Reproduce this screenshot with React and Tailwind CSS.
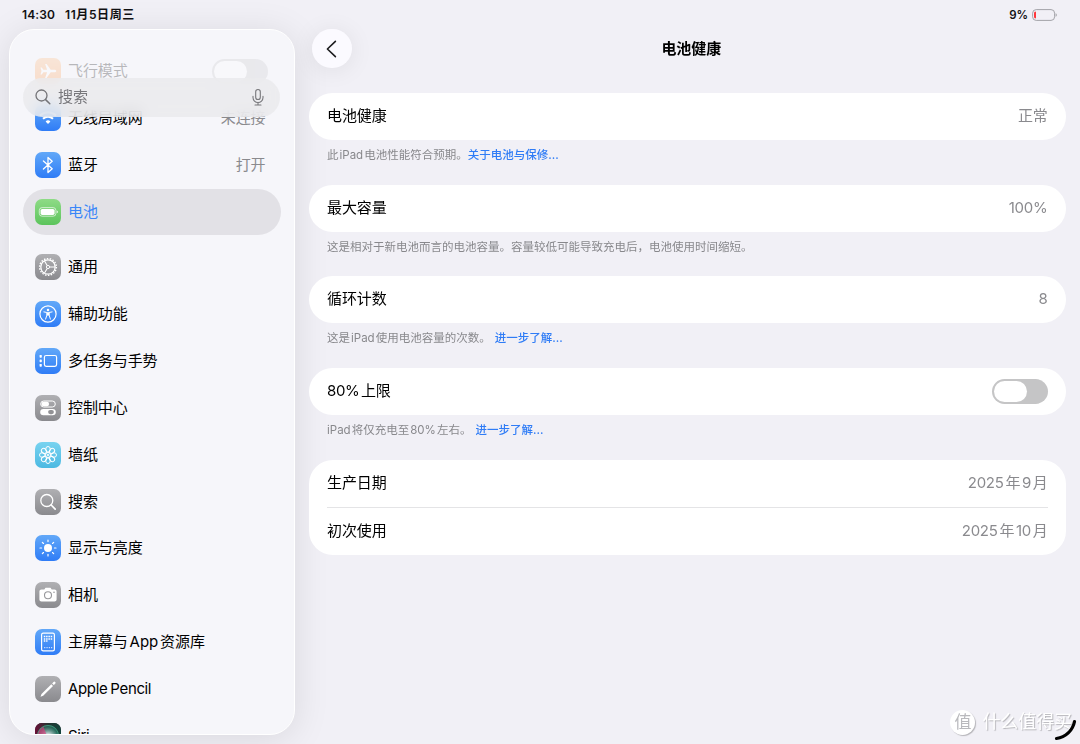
import clsx from 'clsx';

const iconColors = {
  orange: 'bg-linear-to-b from-[#ffb673] to-[#ff9440]',
  blue: 'bg-linear-to-b from-[#62a8f8] to-[#2f7cf6]',
  green: 'bg-linear-to-b from-[#8edb86] to-[#5cc45c]',
  gray: 'bg-linear-to-b from-[#b0b0b3] to-[#8a8a8e]',
  cyan: 'bg-linear-to-b from-[#78d3f0] to-[#4bb9e2]',
  siri: 'bg-[#27131f]',
};

const glyphs = {
  airplane: (
    <path
      d="M21.3 13c0-.8-1-1.3-2.2-1.3h-3.4L11.6 6h-1.5l2 5.7H8.4L6.8 9.6H5.5l1 3.4-1 3.4h1.3l1.6-2.1h3.7l-2 5.7h1.5l4.1-5.7h3.4c1.2 0 2.2-.5 2.2-1.3z"
      fill="white"
    />
  ),
  wifi: (
    <g fill="none" stroke="white" strokeWidth="2.1">
      <path d="M5 10.6a11.4 11.4 0 0 1 16 0" />
      <path d="M8 13.8a7.2 7.2 0 0 1 10 0" />
      <path d="M13 19l-2.4-2.6a3.4 3.4 0 0 1 4.8 0z" fill="white" stroke="none" />
    </g>
  ),
  bluetooth: (
    <path d="M8.4 9l8.8 7.7-4.2 3.8v-15l4.2 3.8L8.4 17" fill="none" stroke="white" strokeWidth="1.3" strokeLinejoin="round" strokeLinecap="round" />
  ),
  battery: (
    <g>
      <rect x="4.3" y="8.6" width="16.6" height="8.6" rx="2.8" fill="none" stroke="white" strokeWidth=".8" strokeOpacity=".8" />
      <rect x="5.6" y="9.9" width="14" height="6" rx="1.7" fill="white" />
      <path d="M21.8 11.5v2.8c.7-.3 1-.8 1-1.4s-.3-1.1-1-1.4z" fill="white" />
    </g>
  ),
  gear: (
    <g fill="none" stroke="white">
      <circle cx="13" cy="13" r="8.4" strokeWidth="1.4" strokeDasharray="1.5 1.432" />
      <circle cx="13" cy="13" r="7.2" strokeWidth="1.3" />
      <circle cx="13" cy="13" r="1.6" strokeWidth="1" />
      <path d="M14.6 13h5.4M12.2 11.6L9.5 6.9M12.2 14.4l-2.7 4.7" strokeWidth="1.1" />
    </g>
  ),
  accessibility: (
    <g>
      <circle cx="13" cy="13" r="8.1" fill="none" stroke="white" strokeWidth="1.2" />
      <circle cx="13" cy="8.9" r="1.25" fill="white" />
      <path d="M8.9 10.9l3 .6v2.6l-1.3 4M17.1 10.9l-3 .6v2.6l1.3 4" fill="none" stroke="white" strokeWidth="1" strokeLinecap="round" strokeLinejoin="round" />
      <path d="M11.7 11.2h2.6v3.2h-2.6z" fill="white" />
    </g>
  ),
  multitask: (
    <g>
      <rect x="9.4" y="7.5" width="12.2" height="10.8" rx="1.7" fill="none" stroke="white" strokeWidth="1.2" />
      <rect x="4.6" y="7" width="2.2" height="2.7" rx=".6" fill="white" />
      <rect x="4.6" y="11.5" width="2.2" height="2.7" rx=".6" fill="white" />
      <rect x="4.6" y="16" width="2.2" height="2.7" rx=".6" fill="white" />
    </g>
  ),
  control: (
    <g>
      <rect x="5.7" y="6" width="14.6" height="6" rx="3" fill="none" stroke="white" strokeWidth="1" />
      <rect x="6.5" y="6.7" width="7.6" height="4.6" rx="2.3" fill="white" />
      <rect x="5.2" y="13.9" width="15.6" height="6.4" rx="3.2" fill="white" />
      <rect x="13.1" y="15" width="5.8" height="4.2" rx="2.1" fill="#929295" />
    </g>
  ),
  flower: (
    <g fill="none" stroke="white" strokeWidth="1">
      {[0, 45, 90, 135, 180, 225, 270, 315].map((angle) => (
        <ellipse key={angle} cx="13" cy="7.3" rx="2.3" ry="2.8" transform={`rotate(${angle} 13 13)`} />
      ))}
      <circle cx="13" cy="13" r="2.5" />
      <circle cx="13" cy="13" r="1.1" fill="white" stroke="none" />
    </g>
  ),
  search: (
    <g fill="none" stroke="white" strokeWidth="1.3" strokeLinecap="round">
      <circle cx="11.8" cy="11.5" r="6" />
      <path d="M16.2 16l4 4.1" strokeWidth="1.7" />
    </g>
  ),
  sun: (
    <g>
      <circle cx="13" cy="13" r="4" fill="white" />
      <g stroke="white" strokeWidth="1.2" strokeLinecap="round">
        {[0, 45, 90, 135, 180, 225, 270, 315].map((angle) => (
          <path key={angle} d="M13 5v1.6" transform={`rotate(${angle} 13 13)`} />
        ))}
      </g>
    </g>
  ),
  camera: (
    <g>
      <path d="M6.5 7.6h2.8l1-1.5c.2-.3.5-.4.9-.4h3.6c.4 0 .7.1.9.4l1 1.5h2.8c1.2 0 2.1.8 2.1 2v7.9c0 1.200-.9 2-2.1 2h-13c-1.2 0-2.1-.8-2.1-2V9.6c0-1.2.9-2 2.1-2z" fill="white" />
      <circle cx="13" cy="13.3" r="3.5" fill="none" stroke="#98989b" strokeWidth="1.1" />
      <circle cx="19" cy="10.3" r=".8" fill="#98989b" />
    </g>
  ),
  home: (
    <g>
      <rect x="6.6" y="4.2" width="12.8" height="17.6" rx="1.6" fill="none" stroke="white" strokeWidth="1.2" />
      <g fill="none" stroke="white" strokeWidth="1.5" strokeDasharray="1.5 .8">
        <path d="M8.8 7.6h8.4M8.8 9.9h8.4" />
        <path d="M8.8 12.1h3.7" />
        <path d="M9.2 18.7h8" strokeWidth="1" strokeDasharray="1.1 1.2" />
      </g>
    </g>
  ),
  pencil: (
    <g>
      <path d="M5.5 20.7l1-2.7 9.8-9.8 1.7 1.7-9.8 9.8z" fill="white" />
      <path d="M17.1 7.4l1.4-1.400a1.200 1.200 0 0 1 1.700 1.700l-1.400 1.400z" fill="white" />
    </g>
  ),
  siri: (
    <g>
      <defs>
        <linearGradient id="siriBg" x1="0" x2="1" y1="0" y2="0">
          <stop offset="0" stopColor="#6b0f37" />
          <stop offset=".5" stopColor="#243330" />
          <stop offset="1" stopColor="#12453c" />
        </linearGradient>
        <radialGradient id="siriGlow" cx=".5" cy=".58" r=".5">
          <stop offset="0" stopColor="#ffffff" />
          <stop offset=".35" stopColor="#c9d6d8" />
          <stop offset="1" stopColor="#2d8f78" stopOpacity=".5" />
        </radialGradient>
      </defs>
      <rect width="26" height="26" fill="url(#siriBg)" />
      <circle cx="13" cy="13" r="11" fill="url(#siriGlow)" />
      <path d="M2.5 13a10.5 10.5 0 0 1 6-9.3L12 13z" fill="#dd3a7c" fillOpacity=".65" />
      <circle cx="13" cy="13" r="10.6" fill="none" stroke="#58c49b" strokeOpacity=".7" strokeWidth=".7" />
    </g>
  ),
};

const menuGroups = [
  [
    { id: 'airplane', name: '飞行模式', color: 'orange', toggle: true, faded: true },
    { id: 'wifi', name: '无线局域网', color: 'blue', value: '未连接' },
    { id: 'bluetooth', name: '蓝牙', color: 'blue', value: '打开' },
    { id: 'battery', name: '电池', color: 'green' },
  ],
  [
    { id: 'gear', name: '通用', color: 'gray' },
    { id: 'accessibility', name: '辅助功能', color: 'blue' },
    { id: 'multitask', name: '多任务与手势', color: 'blue' },
    { id: 'control', name: '控制中心', color: 'gray' },
    { id: 'flower', name: '墙纸', color: 'cyan' },
    { id: 'search', name: '搜索', color: 'gray' },
    { id: 'sun', name: '显示与亮度', color: 'blue' },
    { id: 'camera', name: '相机', color: 'gray' },
    { id: 'home', name: '主屏幕与 App 资源库', color: 'blue' },
    { id: 'pencil', name: 'Apple Pencil', color: 'gray', tight: true },
    { id: 'siri', name: 'Siri', color: 'siri', tight: true },
  ],
];

const sections = [
  {
    rows: [{ label: '电池健康', value: '正常' }],
    note: '此 iPad 电池性能符合预期。',
    link: '关于电池与保修...',
    height: 'h-[92px]',
  },
  {
    rows: [{ label: '最大容量', value: '100%' }],
    note: '这是相对于新电池而言的电池容量。容量较低可能导致充电后，电池使用时间缩短。',
    height: 'h-[91px]',
  },
  {
    rows: [{ label: '循环计数', value: '8' }],
    note: '这是 iPad 使用电池容量的次数。',
    link: '进一步了解...',
    linkClass: 'ml-[4px]',
    height: 'h-[92px]',
  },
  {
    rows: [{ label: '80% 上限', toggle: true, tight: true }],
    note: 'iPad 将仅充电至 80% 左右。',
    link: '进一步了解...',
    linkClass: 'ml-[4px]',
    height: 'h-[92px]',
  },
  {
    rows: [
      { label: '生产日期', value: '2025 年 9 月' },
      { label: '初次使用', value: '2025 年 10 月' },
    ],
  },
];

function Toggle() {
  return (
    <button className="flex h-[25px] w-[56px] shrink-0 items-center rounded-full bg-[#c5c5c6] p-[2px]" aria-label="toggle">
      <span className="h-[21.5px] w-[33px] rounded-full bg-white" />
    </button>
  );
}

function StatusBar() {
  return (
    <header className="flex h-[29px] items-center justify-between pr-[23px] pl-[22px] text-[12px] font-semibold text-[#111113]">
      <div className="flex gap-[10px]">
        <span className="tracking-[0.1px]">14:30</span>
        <span className="tracking-[0.6px]">11月5日周三</span>
      </div>
      <div className="flex items-center gap-[4px]">
        <span className="text-[11.5px]">9%</span>
        <svg width="25" height="12" viewBox="0 0 25 12">
          <rect x=".6" y=".6" width="22" height="10.8" rx="3.6" fill="none" stroke="#a3a3a8" />
          <path d="M3.5 2.8v6.4c-.9 0-1.5-.6-1.5-1.5V4.3c0-.9.6-1.5 1.5-1.5z" fill="#ff383c" />
          <rect x="2.8" y="2.8" width="1.2" height="6.4" fill="#ff383c" />
          <path d="M23.6 4.2c.8.3 1.2 1 1.2 1.8s-.4 1.5-1.2 1.8z" fill="#a3a3a8" />
        </svg>
      </div>
    </header>
  );
}

function MenuItem({ item, selected }) {
  return (
    <div
      className={clsx(
        'flex h-[46.85px] items-center rounded-full pr-[15px] pl-[12px]',
        selected && 'bg-[#e2e1e6]',
        item.faded && 'opacity-25'
      )}
    >
      <span className={clsx('h-[26px] w-[26px] shrink-0 overflow-hidden rounded-[7px]', iconColors[item.color])}>
        <svg width="26" height="26" viewBox="0 0 26 26">{glyphs[item.id]}</svg>
      </span>
      <span
        className={clsx(
          'ml-[7px] flex-1',
          selected ? 'text-[#3a86f8]' : 'text-black',
          item.tight && 'tracking-[-0.36px] [word-spacing:-0.8px]'
        )}
      >
        {item.name}
      </span>
      {item.value && <span className="text-[#8a8a8e]">{item.value}</span>}
      {item.toggle && <div className="-mr-[2px] flex"><Toggle /></div>}
    </div>
  );
}

function Sidebar() {
  return (
    <aside className="relative h-[706px] w-[285.5px] shrink-0 overflow-hidden rounded-[25px] border border-white bg-[#f6f6fa] shadow-[0_4px_36px_rgba(0,0,0,0.1)]">
      <nav className="flex flex-col gap-[8.5px] px-[13px] pt-[18px]">
        {menuGroups.map((group, index) => (
          <div key={index}>
            {group.map((item) => (
              <MenuItem key={item.id} item={item} selected={item.id === 'battery'} />
            ))}
          </div>
        ))}
      </nav>
      {/* The search field floats over the scrolling list */}
      <div className="absolute top-[48px] left-[13px] flex h-[39px] w-[257px] items-center rounded-full bg-[#eaeaec]/80 pr-[15px] pb-[1px] pl-[12px] text-[#77777b] backdrop-blur-[7px]">
        <svg width="16" height="16" viewBox="0 0 16 16" fill="none" stroke="#747478" strokeWidth="1.3" strokeLinecap="round">
          <circle cx="6.5" cy="6.5" r="5.5" />
          <path d="M10.6 10.6l4.2 4.2" strokeWidth="1.5" />
        </svg>
        <span className="ml-[7px] flex-1">搜索</span>
        <svg width="14" height="18" viewBox="0 0 14 18" fill="none" stroke="#77777b" strokeWidth="1.1" strokeLinecap="round">
          <rect x="4.7" y="1.5" width="4.6" height="10" rx="2.3" />
          <path d="M2 8.3v1.2a5 5 0 0 0 10 0V8.3M7 14.5V17M4 17h6" />
        </svg>
      </div>
    </aside>
  );
}

function Section({ section }) {
  return (
    <section className={section.height}>
      <div className="rounded-[24px] bg-white px-[18px]">
        {section.rows.map((row, index) => (
          <div
            key={row.label}
            className={clsx('flex h-[47.5px] items-center justify-between', index > 0 && 'border-t border-[#e4e4e6]')}
          >
            <span className={clsx('text-black', row.tight && 'tracking-[-0.35px]')}>{row.label}</span>
            {row.toggle ? <Toggle /> : <span className="pr-[0.5px] tracking-[-0.25px] text-[#8a8a8e]">{row.value}</span>}
          </div>
        ))}
      </div>
      {section.note && (
        <p className="px-[18px] pt-[4.6px] text-[11.5px] leading-[20px] tracking-normal text-[#88888c]">
          {section.note}
          {section.link && (
            <a href="#" className={clsx('font-medium text-[#2f7cf6]', section.linkClass)}>
              {section.link}
            </a>
          )}
        </p>
      )}
    </section>
  );
}

function Watermark() {
  return (
    <div className="absolute right-[8px] bottom-[9px] flex items-center gap-[7px] text-white">
      <span className="flex h-[25px] w-[25px] items-center justify-center rounded-full bg-white text-[17px] leading-none text-[#b9b9bd] shadow-[1px_1px_1px_rgba(0,0,0,0.25)]">
        值
      </span>
      <span className="text-[18px] leading-[26px] [text-shadow:1px_1px_1px_rgba(0,0,0,0.25)]">什么值得买</span>
    </div>
  );
}

export default function App() {
  return (
    <div className="relative h-[744px] w-[1080px] overflow-hidden bg-[#f1f0f6] font-['Inter','Noto_Sans_CJK_SC',sans-serif] text-[15px] leading-[22px] tracking-[-0.08px] [word-spacing:-2.2px]">
      <StatusBar />
      <div className="flex pl-[9px]">
        <Sidebar />
        <main className="relative ml-[14.5px] w-[757px]">
          <div className="flex h-[63.5px] items-start pl-[3px]">
            <button
              className="flex h-[39px] w-[39.5px] items-center justify-center rounded-full bg-[#fbfaff] shadow-[0_2px_24px_rgba(0,0,0,0.08)]"
              aria-label="返回"
            >
              <svg width="12" height="18" viewBox="0 0 12 18" fill="none" stroke="#1c1c1e" strokeWidth="1.6" strokeLinecap="round" strokeLinejoin="round">
                <path d="M9.4 1.3L1.4 9l8 7.7" />
              </svg>
            </button>
            <h1 className="flex-1 pr-[35px] text-center leading-[39px] font-semibold text-black">电池健康</h1>
          </div>
          {sections.map((section) => (
            <Section key={section.rows[0].label} section={section} />
          ))}
        </main>
      </div>
      <Watermark />
      {/* Corner handle */}
      <svg className="absolute right-0 bottom-0" width="28" height="28" viewBox="0 0 28 28" fill="none">
        <path d="M22.5 5.5A21 21 0 0 1 4.5 22.5" stroke="black" strokeWidth="3.2" strokeLinecap="round" />
      </svg>
    </div>
  );
}
